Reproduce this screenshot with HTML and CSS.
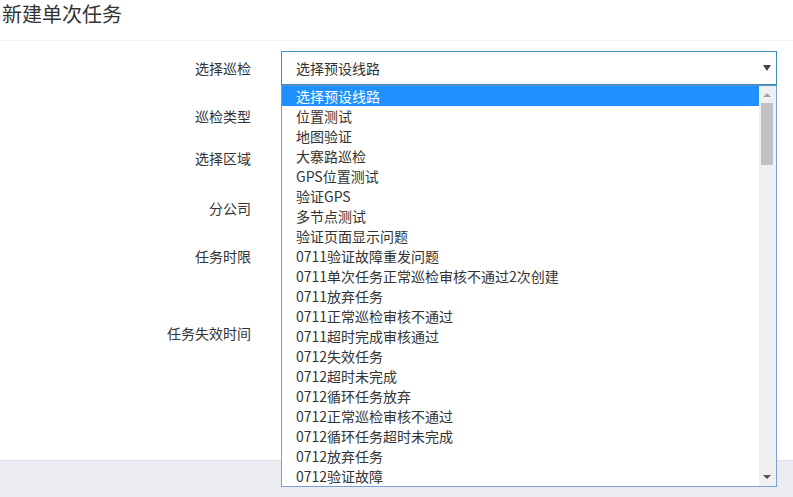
FILE: index.html
```html
<!DOCTYPE html>
<html lang="zh-CN">
<head>
    <meta charset="UTF-8">
    <meta name="viewport" content="width=device-width, initial-scale=1.0">
    <title>新建单次任务</title>
    <link rel="stylesheet" href="styles.css">
</head>
<body>
    <div class="page">
        <div class="page-header">
            <h1 class="page-title">新建单次任务</h1>
        </div>
        <div class="page-body">
            <div class="form-row row-1">
                <label class="form-label">选择巡检</label>
                <div class="form-control">
                    <div class="select-box">
                        <span class="select-text">选择预设线路</span>
                        <span class="select-arrow"></span>
                    </div>
                    <div class="dropdown">
                        <ul class="dropdown-list">
                            <li class="active">选择预设线路</li>
                            <li>位置测试</li>
                            <li>地图验证</li>
                            <li>大寨路巡检</li>
                            <li>GPS位置测试</li>
                            <li>验证GPS</li>
                            <li>多节点测试</li>
                            <li>验证页面显示问题</li>
                            <li>0711验证故障重发问题</li>
                            <li>0711单次任务正常巡检审核不通过2次创建</li>
                            <li>0711放弃任务</li>
                            <li>0711正常巡检审核不通过</li>
                            <li>0711超时完成审核通过</li>
                            <li>0712失效任务</li>
                            <li>0712超时未完成</li>
                            <li>0712循环任务放弃</li>
                            <li>0712正常巡检审核不通过</li>
                            <li>0712循环任务超时未完成</li>
                            <li>0712放弃任务</li>
                            <li>0712验证故障</li>
                        </ul>
                        <div class="scrollbar">
                            <span class="scroll-up"></span>
                            <span class="scroll-thumb"></span>
                            <span class="scroll-down"></span>
                        </div>
                    </div>
                </div>
            </div>
            <div class="form-row row-2">
                <label class="form-label">巡检类型</label>
            </div>
            <div class="form-row row-3">
                <label class="form-label">选择区域</label>
            </div>
            <div class="form-row row-4">
                <label class="form-label">分公司</label>
            </div>
            <div class="form-row row-5">
                <label class="form-label">任务时限</label>
            </div>
            <div class="form-row row-6">
                <label class="form-label">任务失效时间</label>
            </div>
        </div>
        <div class="page-footer"></div>
    </div>
</body>
</html>
```

FILE: styles.css
```css
* {
    margin: 0;
    padding: 0;
    box-sizing: border-box;
}
html, body {
    width: 100%;
    height: 100%;
    font-family: "Noto Sans CJK SC", "Noto Sans", sans-serif;
    color: #333;
    background-color: #fff;
    overflow: hidden;
}
.page {
    display: flex;
    flex-direction: column;
    height: 100%;
}
.page-header {
    height: 41px;
    border-bottom: 1px solid #f0f0f0;
    padding-left: 2px;
}
.page-title {
    font-size: 20px;
    font-weight: normal;
    line-height: 28px;
    color: #333;
}
.page-body {
    height: 419px;
    padding-top: 10px;
}
.page-footer {
    flex: 1;
    background-color: #ebedf2;
    border-top: 1px solid #dfe1e6;
}
.form-row {
    display: flex;
    align-items: flex-start;
}
.row-1 { height: 48px; }
.row-2 { height: 42px; }
.row-3 { height: 50px; }
.row-4 { height: 48px; }
.row-5 { height: 77px; }
.row-6 { height: 40px; }
.form-label {
    width: 251px;
    padding-top: 7px;
    font-size: 14px;
    line-height: 20px;
    text-align: right;
    color: #333;
}
.form-control {
    position: relative;
    margin-left: 30px;
    width: 496px;
}
.select-box {
    display: flex;
    align-items: center;
    height: 34px;
    border: 1px solid #3c8dbc;
    padding-left: 14px;
    padding-right: 5px;
    font-size: 14px;
    background-color: #fff;
}
.select-text {
    flex: 1;
    line-height: 20px;
}
.select-arrow {
    width: 0;
    height: 0;
    border-left: 4px solid transparent;
    border-right: 4px solid transparent;
    border-top: 6px solid #444;
}
.dropdown {
    position: absolute;
    top: 34px;
    left: 0;
    width: 496px;
    height: 402px;
    display: flex;
    border: 1px solid #7a9ed8;
    border-top-color: #5b93c8;
    background-color: #fff;
    z-index: 10;
}
.dropdown-list {
    flex: 1;
    list-style: none;
    overflow: hidden;
}
.dropdown-list li {
    height: 20px;
    line-height: 20px;
    padding-left: 14px;
    font-size: 14px;
    color: #333;
    white-space: nowrap;
}
.dropdown-list li.active {
    background-color: #1e90ff;
    color: #fff;
}
.scrollbar {
    position: relative;
    width: 17px;
    background-color: #f0f0f0;
}
.scroll-up {
    position: absolute;
    top: 7px;
    left: 4px;
    border-left: 4px solid transparent;
    border-right: 4px solid transparent;
    border-bottom: 4px solid #a3a3a3;
}
.scroll-thumb {
    position: absolute;
    top: 17px;
    left: 2px;
    width: 12px;
    height: 62px;
    background-color: #c1c1c1;
}
.scroll-down {
    position: absolute;
    bottom: 7px;
    left: 4px;
    border-left: 4px solid transparent;
    border-right: 4px solid transparent;
    border-top: 4px solid #505050;
}
```
